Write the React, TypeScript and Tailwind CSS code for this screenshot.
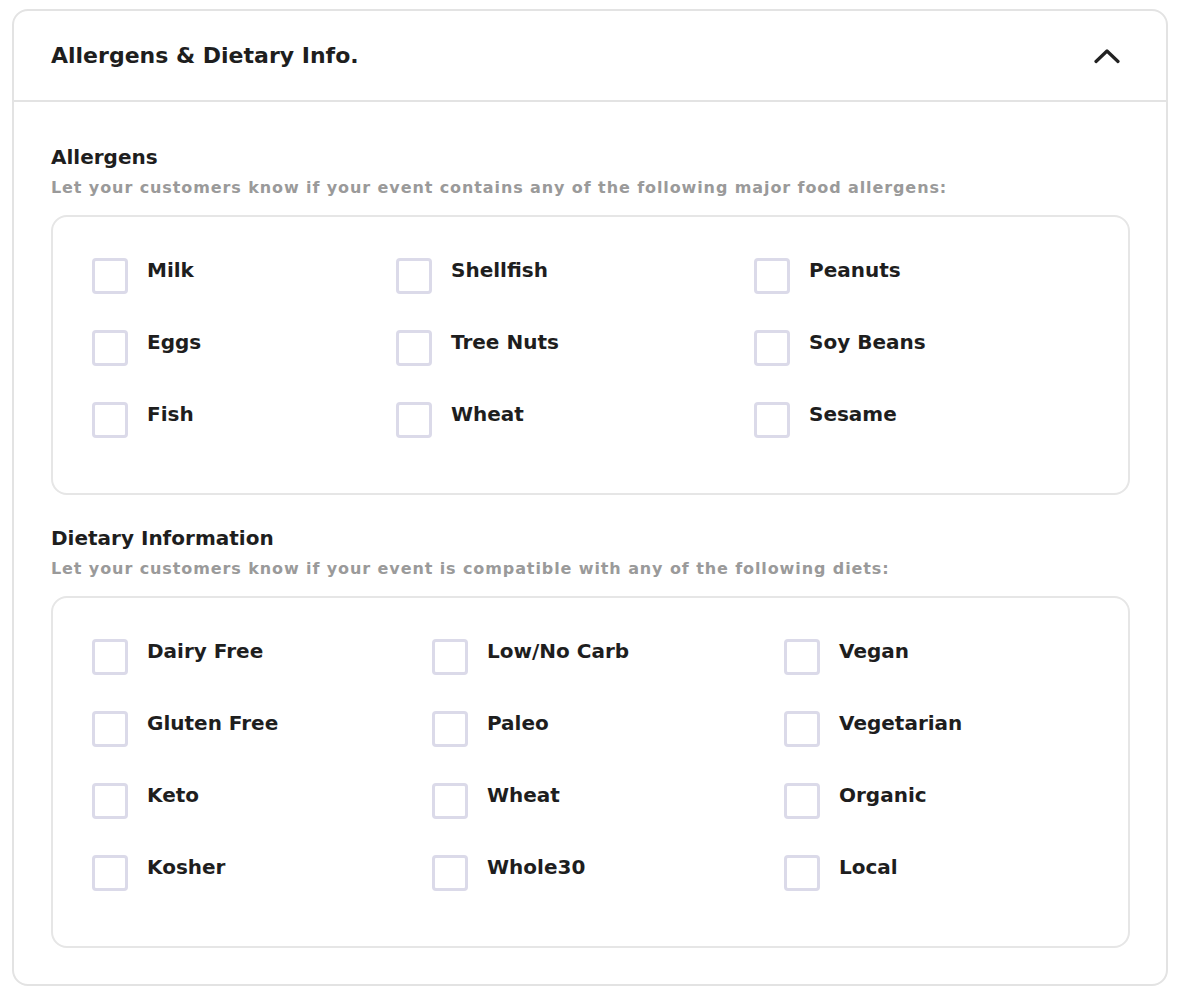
import React, { useState } from 'react'

interface OptionGroupProps {
  title: string
  description: string
  columns: string[][]
  gridClass: string
}

const allergenColumns = [
  ['Milk', 'Eggs', 'Fish'],
  ['Shellfish', 'Tree Nuts', 'Wheat'],
  ['Peanuts', 'Soy Beans', 'Sesame'],
]

const dietColumns = [
  ['Dairy Free', 'Gluten Free', 'Keto', 'Kosher'],
  ['Low/No Carb', 'Paleo', 'Wheat', 'Whole30'],
  ['Vegan', 'Vegetarian', 'Organic', 'Local'],
]

const Checkbox: React.FC<{ label: string }> = ({ label }) => {
  const [checked, setChecked] = useState(false)
  return (
    <label className="flex items-start gap-[19px] cursor-pointer">
      <span
        onClick={() => setChecked(!checked)}
        className={`w-9 h-9 shrink-0 rounded-[4px] border-[3px] border-[#dbdae9] ${checked ? 'bg-[#dbdae9]' : 'bg-white'}`}
      />
      <span className="text-[20px] leading-[24px] font-bold text-[#1e1e1e]">{label}</span>
    </label>
  )
}

const OptionGroup: React.FC<OptionGroupProps> = ({ title, description, columns, gridClass }) => {
  const rows = Math.max(...columns.map(c => c.length))
  const cells: string[] = []
  for (let r = 0; r < rows; r++) {
    columns.forEach(col => {
      if (col[r]) cells.push(col[r])
    })
  }
  return (
    <div>
      <h3 className="text-[20px] leading-[24px] font-bold text-[#1e1e1e]">{title}</h3>
      <p className="mt-[9px] text-[16px] leading-[20px] font-bold text-[#9a9a9a] tracking-[0.9px]">{description}</p>
      <div className="mt-[17px] border-2 border-[#e6e6e6] rounded-2xl pl-[39px] pr-[10px] pt-[41px] pb-[55px]">
        <div className={`grid ${gridClass} gap-y-[36px]`}>
          {cells.map((cell, i) => (
            <Checkbox key={i} label={cell} />
          ))}
        </div>
      </div>
    </div>
  )
}

const App: React.FC = () => {
  const [open, setOpen] = useState(true)

  return (
    <div className="min-h-screen bg-white pt-[9px] px-[12px] font-['DejaVu_Sans','Noto_Sans',sans-serif]">
      <div className="border-2 border-[#e3e3e3] rounded-2xl bg-white">
        <button
          onClick={() => setOpen(!open)}
          className="w-full h-[91px] flex items-center justify-between pl-[37px] pr-[46px] border-b-2 border-[#e3e3e3]"
        >
          <span className="text-[22px] font-bold text-[#1e1e1e]">Allergens &amp; Dietary Info.</span>
          <svg width="26" height="16" viewBox="0 0 26 16" fill="none" className={open ? '' : 'rotate-180'}>
            <path d="M2 13.5L13 3L24 13.5" stroke="#222" strokeWidth="3.2" strokeLinecap="round" strokeLinejoin="round" />
          </svg>
        </button>
        {open && (
          <div className="pl-[37px] pr-[36px] pt-[43px] pb-[36px] flex flex-col gap-[31px]">
            <OptionGroup
              title="Allergens"
              description="Let your customers know if your event contains any of the following major food allergens:"
              columns={allergenColumns}
              gridClass="grid-cols-[304px_358px_1fr]"
            />
            <OptionGroup
              title="Dietary Information"
              description="Let your customers know if your event is compatible with any of the following diets:"
              columns={dietColumns}
              gridClass="grid-cols-[340px_352px_1fr]"
            />
          </div>
        )}
      </div>
    </div>
  )
}

export default App
